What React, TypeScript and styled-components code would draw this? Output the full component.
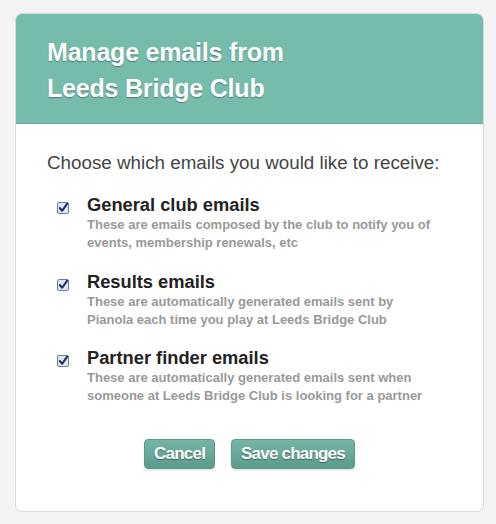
import styled, { createGlobalStyle } from 'styled-components';
import { useState } from 'react';

const GlobalStyle = createGlobalStyle`
  html, body {
    margin: 0;
    padding: 0;
    background: #f4f4f4;
  }
  body {
    font-family: "Liberation Sans", Arial, Helvetica, sans-serif;
  }
`

const options = [
  {
    key: 'general',
    title: 'General club emails',
    lines: ['These are emails composed by the club to notify you of', 'events, membership renewals, etc'],
  },
  {
    key: 'results',
    title: 'Results emails',
    lines: ['These are automatically generated emails sent by', 'Pianola each time you play at Leeds Bridge Club'],
  },
  {
    key: 'partner',
    title: 'Partner finder emails',
    lines: ['These are automatically generated emails sent when', 'someone at Leeds Bridge Club is looking for a partner'],
  },
];

const CheckIcon = () => (
  <svg width="12" height="12" viewBox="0 0 12 12">
    <rect x="0.5" y="0.5" width="11" height="11" rx="1.5" fill="#dfe6f3" stroke="#6f7f99" />
    <path d="M2.8 6 L5.2 8.8 L10.2 1.6" fill="none" stroke="#1d2c57" strokeWidth="2" strokeLinecap="round" strokeLinejoin="round" />
  </svg>
);

export default function App() {
  const [checked, setChecked] = useState<Record<string, boolean>>({ general: true, results: true, partner: true });

  return (
    <Page>
      <GlobalStyle />
      <Card>
        <Header>
          <Title>Manage emails from<br />Leeds Bridge Club</Title>
        </Header>
        <Body>
          <Intro>Choose which emails you would like to receive:</Intro>
          <List>
            {options.map((o) => (
              <Option key={o.key} onClick={() => setChecked({ ...checked, [o.key]: !checked[o.key] })}>
                <Box>{checked[o.key] ? <CheckIcon /> : <Empty />}</Box>
                <Text>
                  <Label>{o.title}</Label>
                  <Desc>{o.lines[0]}<br />{o.lines[1]}</Desc>
                </Text>
              </Option>
            ))}
          </List>
          <Actions>
            <Button>Cancel</Button>
            <Button>Save changes</Button>
          </Actions>
        </Body>
      </Card>
    </Page>
  );
}

const Page = styled.div`
  padding: 13px 12px 14px 15px;
`
const Card = styled.div`
  width: 469px;
  box-sizing: border-box;
  background: #fff;
  border: 1px solid #d9d9d9;
  border-radius: 7px;
  overflow: hidden;
`
const Header = styled.div`
  background: #76bcad;
  height: 110px;
  box-sizing: border-box;
  padding: 20px 31px 0;
  border-bottom: 1px solid #6aaa9c;
`
const Title = styled.h1`
  margin: 0;
  color: #fff;
  font-size: 25px;
  line-height: 36px;
  font-weight: bold;
  letter-spacing: -0.2px;
  text-shadow: 0 1px 1px rgba(0, 0, 0, 0.35);
`
const Body = styled.div`
  padding: 28px 31px 42px;
`
const Intro = styled.p`
  margin: 0;
  font-size: 18.8px;
  line-height: 22px;
  color: #444;
`
const List = styled.div`
  display: flex;
  flex-direction: column;
  gap: 18.5px;
  margin-top: 20px;
`
const Option = styled.div`
  display: flex;
  gap: 18px;
  padding-left: 10px;
  cursor: pointer;
`
const Box = styled.div`
  width: 12px;
  height: 12px;
  margin-top: 6px;
  flex-shrink: 0;
`
const Empty = styled.div`
  width: 10px;
  height: 10px;
  border: 1px solid #8a8a8a;
  border-radius: 2px;
  background: #fff;
`
const Text = styled.div`
  display: flex;
  flex-direction: column;
`
const Label = styled.div`
  font-size: 18.3px;
  font-weight: bold;
  line-height: 22px;
  color: #222;
`
const Desc = styled.div`
  font-size: 13px;
  font-weight: bold;
  line-height: 18px;
  color: #999;
`
const Actions = styled.div`
  display: flex;
  justify-content: center;
  gap: 16px;
  margin-top: 34px;
`
const Button = styled.button`
  height: 30px;
  padding: 0 9px;
  border: 1px solid #5a9a8b;
  border-radius: 4px;
  background: linear-gradient(#74b5a6, #5a9b8c);
  color: #fff;
  font-family: "Liberation Sans", Arial, Helvetica, sans-serif;
  font-size: 17px;
  font-weight: bold;
  letter-spacing: -0.8px;
  text-shadow: 0 1px 1px rgba(0, 0, 0, 0.4);
  box-shadow: 0 1px 2px rgba(0, 0, 0, 0.15);
  cursor: pointer;
`
